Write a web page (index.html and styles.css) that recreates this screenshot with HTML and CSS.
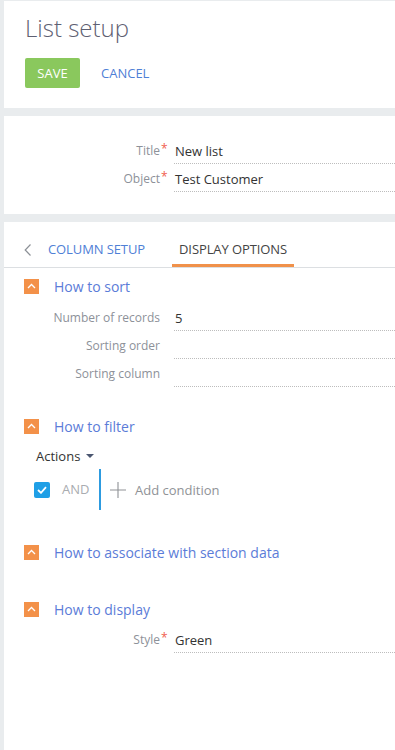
FILE: index.html
```html
<!DOCTYPE html>
<html lang="en">
<head>
    <meta charset="UTF-8">
    <meta name="viewport" content="width=device-width, initial-scale=1.0">
    <title>List setup</title>
    <link rel="stylesheet" href="styles.css">
</head>
<body>
    <div class="page">
        <div class="panel header-panel">
            <h1 class="page-title">List setup</h1>
            <div class="actions-bar">
                <button class="btn-save">SAVE</button>
                <button class="btn-cancel">CANCEL</button>
            </div>
        </div>

        <div class="panel form-panel">
            <div class="field-row">
                <label class="field-label required">Title</label>
                <div class="field-value">New list</div>
            </div>
            <div class="field-row">
                <label class="field-label required">Object</label>
                <div class="field-value">Test Customer</div>
            </div>
        </div>

        <div class="panel main-panel">
            <div class="tabs">
                <span class="tab-back">
                    <svg width="8" height="12" viewBox="0 0 8 12"><path d="M6.5 0.5 L1.2 6 L6.5 11.5" fill="none" stroke="#8c9096" stroke-width="1.2"/></svg>
                </span>
                <span class="tab">COLUMN SETUP</span>
                <span class="tab active">DISPLAY OPTIONS</span>
            </div>

            <div class="group-header first">
                <span class="group-toggle">
                    <svg width="9" height="6" viewBox="0 0 9 6"><path d="M1 5 L4.5 1.5 L8 5" fill="none" stroke="#fff" stroke-width="1.3"/></svg>
                </span>
                <span class="group-title">How to sort</span>
            </div>
            <div class="field-row">
                <label class="field-label">Number of records</label>
                <div class="field-value">5</div>
            </div>
            <div class="field-row">
                <label class="field-label">Sorting order</label>
                <div class="field-value"></div>
            </div>
            <div class="field-row">
                <label class="field-label">Sorting column</label>
                <div class="field-value"></div>
            </div>

            <div class="group-header filter">
                <span class="group-toggle">
                    <svg width="9" height="6" viewBox="0 0 9 6"><path d="M1 5 L4.5 1.5 L8 5" fill="none" stroke="#fff" stroke-width="1.3"/></svg>
                </span>
                <span class="group-title">How to filter</span>
            </div>
            <div class="filter-actions">Actions <span class="caret"></span></div>
            <div class="condition-row">
                <span class="checkbox">
                    <svg width="10" height="8" viewBox="0 0 10 8"><path d="M1 4 L4 6.8 L9 1.2" fill="none" stroke="#fff" stroke-width="1.8"/></svg>
                </span>
                <span class="logic">AND</span>
                <span class="condition-add">
                    <svg width="16" height="16" viewBox="0 0 16 16"><path d="M8 0 V16 M0 8 H16" stroke="#8f9296" stroke-width="1.1"/></svg>
                    Add condition
                </span>
            </div>

            <div class="group-header associate">
                <span class="group-toggle">
                    <svg width="9" height="6" viewBox="0 0 9 6"><path d="M1 5 L4.5 1.5 L8 5" fill="none" stroke="#fff" stroke-width="1.3"/></svg>
                </span>
                <span class="group-title">How to associate with section data</span>
            </div>

            <div class="group-header display">
                <span class="group-toggle">
                    <svg width="9" height="6" viewBox="0 0 9 6"><path d="M1 5 L4.5 1.5 L8 5" fill="none" stroke="#fff" stroke-width="1.3"/></svg>
                </span>
                <span class="group-title">How to display</span>
            </div>
            <div class="field-row">
                <label class="field-label required">Style</label>
                <div class="field-value">Green</div>
            </div>
        </div>
    </div>
</body>
</html>
```

FILE: styles.css
```css
body {
    margin: 0;
    padding: 0;
    background-color: #e9ecee;
    font-family: "Open Sans", Arial, sans-serif;
    font-size: 13px;
    color: #333;
}

.page {
    padding: 1px 0 0 4px;
}

.panel {
    background: #fff;
    margin-bottom: 8px;
}

.header-panel {
    height: 107px;
    box-sizing: border-box;
    padding: 11px 0 0 21px;
}

.page-title {
    margin: 0;
    font-size: 24px;
    font-weight: 300;
    color: #5e6072;
    line-height: 32px;
}

.actions-bar {
    display: flex;
    align-items: center;
    margin-top: 14px;
}

.btn-save {
    background-color: #8ac85d;
    border: none;
    color: #fff;
    font-family: inherit;
    font-size: 13px;
    padding: 0;
    width: 55px;
    height: 30px;
    border-radius: 2px;
}

.btn-cancel {
    background: none;
    border: none;
    color: #4f80d6;
    font-family: inherit;
    font-size: 13px;
    padding: 0;
    margin-left: 21px;
}

.form-panel {
    height: 98px;
    box-sizing: border-box;
    padding-top: 23px;
}

.field-row {
    display: flex;
    margin-bottom: 3px;
}

.field-label {
    width: 156px;
    text-align: right;
    color: #8d9199;
    font-size: 12px;
    line-height: 24px;
    position: relative;
    flex-shrink: 0;
}

.field-label.required::after {
    content: "*";
    color: #f0604f;
    font-size: 12px;
    position: absolute;
    left: 157px;
    top: -2px;
}

.field-value {
    flex: 1;
    margin-left: 14px;
    padding-left: 1px;
    line-height: 24px;
    height: 24px;
    border-bottom: 1px dotted #bdbdbd;
    color: #333;
}

.main-panel {
    min-height: 528px;
    margin-bottom: 0;
    padding-bottom: 0;
}

.tabs {
    display: flex;
    align-items: center;
    height: 46px;
    border-bottom: 1px solid #dcdfe2;
    box-sizing: border-box;
    padding-top: 6px;
}

.tab-back {
    display: flex;
    margin-left: 20px;
    margin-top: 5px;
    width: 17px;
}

.tab {
    color: #4f80d6;
    height: 39px;
    line-height: 42px;
    box-sizing: border-box;
    padding: 0 7px;
    margin-right: 20px;
    letter-spacing: -0.1px;
}

.tab.active {
    color: #444;
    border-bottom: 3px solid #f0914a;
}

.group-header {
    display: flex;
    align-items: center;
    height: 20px;
    padding-left: 20px;
}

.group-header.first {
    margin-top: 8px;
    margin-bottom: 10px;
}

.group-header.filter {
    margin-top: 29px;
}

.group-header.associate {
    margin-top: 32px;
}

.group-header.display {
    margin-top: 37px;
    margin-bottom: 9px;
}

.group-toggle {
    width: 15px;
    height: 15px;
    background-color: #f39149;
    display: flex;
    align-items: center;
    justify-content: center;
}

.group-title {
    margin-left: 15px;
    color: #5b7cd8;
    font-size: 14px;
}

.filter-actions {
    margin: 10px 0 0 32px;
    height: 20px;
    line-height: 20px;
    color: #333;
    display: flex;
    align-items: center;
}

.caret {
    width: 0;
    height: 0;
    border-left: 4px solid transparent;
    border-right: 4px solid transparent;
    border-top: 4px solid #4a5670;
    margin-left: 6px;
}

.condition-row {
    display: flex;
    align-items: center;
    height: 41px;
    margin-top: 3px;
    padding-left: 30px;
}

.checkbox {
    width: 16px;
    height: 16px;
    border-radius: 2px;
    background-color: #1f9fe6;
    display: flex;
    align-items: center;
    justify-content: center;
}

.logic {
    color: #a9acb0;
    margin-left: 12px;
    width: 37px;
    height: 41px;
    line-height: 41px;
    border-right: 2px solid #2d9be0;
}

.condition-add {
    display: flex;
    align-items: center;
    color: #8f9296;
    margin-left: 9px;
}

.condition-add svg {
    margin-right: 9px;
}
```
